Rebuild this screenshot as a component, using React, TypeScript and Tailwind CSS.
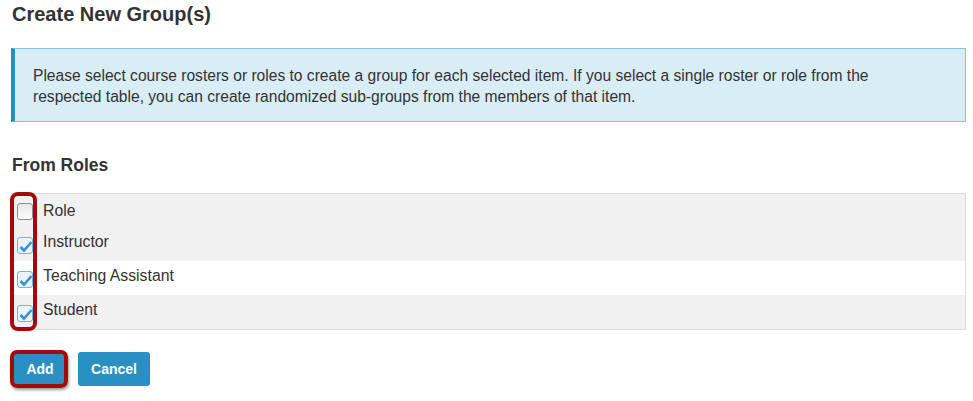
import React from "react";

const ROWS = [
  { label: "Role", checked: false, bg: "bg-[#f1f1f1]", h: "h-[33px]", up: false },
  { label: "Instructor", checked: true, bg: "bg-[#f1f1f1]", h: "h-[34px]", up: true },
  { label: "Teaching Assistant", checked: true, bg: "bg-white", h: "h-[34px]", up: true },
  { label: "Student", checked: true, bg: "bg-[#f1f1f1]", h: "h-[34px]", up: true },
];

function Box({ checked }: { checked: boolean }) {
  if (!checked) {
    return (
      <span className="block h-[17px] w-[16px] rounded-[3px] border border-[#8f8f8f] bg-gradient-to-b from-[#e6e6e6] to-white" />
    );
  }
  return (
    <span className="relative block h-[17px] w-[16px] rounded-[3px] border border-[#6fb4e6] bg-[#eaf4fb]">
      <svg className="absolute left-[1px] top-[2px]" width="14" height="13" viewBox="0 0 14 13">
        <path d="M1.5 7 L5 10.5 L12.5 2" fill="none" stroke="#3b8fd6" strokeWidth="2.6" />
      </svg>
    </span>
  );
}

export default function App() {
  return (
    <div className="h-[401px] w-[973px] bg-white font-['Liberation_Sans',Arial,sans-serif] text-[#333]">
      <div className="px-[12px] pt-[1px]">
        <h1 className="text-[20px] font-bold leading-[26px] text-[#333]">Create New Group(s)</h1>
      </div>

      <div className="ml-[11px] mr-[7px] mt-[21px] h-[74px] border border-l-4 border-[#7ac8ea] border-l-[#2a8dc0] bg-[#d9edf7] px-[18px] pt-[16px] text-[15.6px] leading-[21px] text-[#333]">
        Please select course rosters or roles to create a group for each selected item. If you select a single roster or role from the
        <br />
        respected table, you can create randomized sub-groups from the members of that item.
      </div>

      <h2 className="ml-[12px] mt-[31px] text-[17.5px] font-bold leading-[24px] text-[#333]">From Roles</h2>

      <div className="relative ml-[11px] mr-[7px] mt-[16px]">
        <div className="border-r border-t border-[#dcdcdc] border-b">
          {ROWS.map((r) => (
            <div key={r.label} className={`flex items-center ${r.bg} ${r.h}`}>
              <div className="ml-[6px] mt-[2px] w-[26px]">
                <Box checked={r.checked} />
              </div>
              <span className={`text-[15.8px] leading-[20px] text-[#333] ${r.up ? "mb-[4px]" : ""}`}>{r.label}</span>
            </div>
          ))}
        </div>
        <div className="absolute left-[-1px] top-[-1px] h-[139px] w-[27px] rounded-[8px] border-[4px] border-[#a30a0a]" />
      </div>

      <div className="ml-[13px] mt-[22px] flex gap-[11px]">
        <div className="relative">
          <button className="h-[34px] w-[54px] rounded-[3px] bg-[#2a8fc2] text-[14px] font-bold text-white">Add</button>
          <div className="absolute left-[-3px] top-[-2px] h-[38px] w-[58px] rounded-[7px] border-[4px] border-[#a30a0a] shadow-[1px_2px_3px_rgba(0,0,0,0.4)]" />
        </div>
        <button className="h-[34px] w-[72px] rounded-[3px] bg-[#2a8fc2] text-[14px] font-bold text-white">Cancel</button>
      </div>
    </div>
  );
}
